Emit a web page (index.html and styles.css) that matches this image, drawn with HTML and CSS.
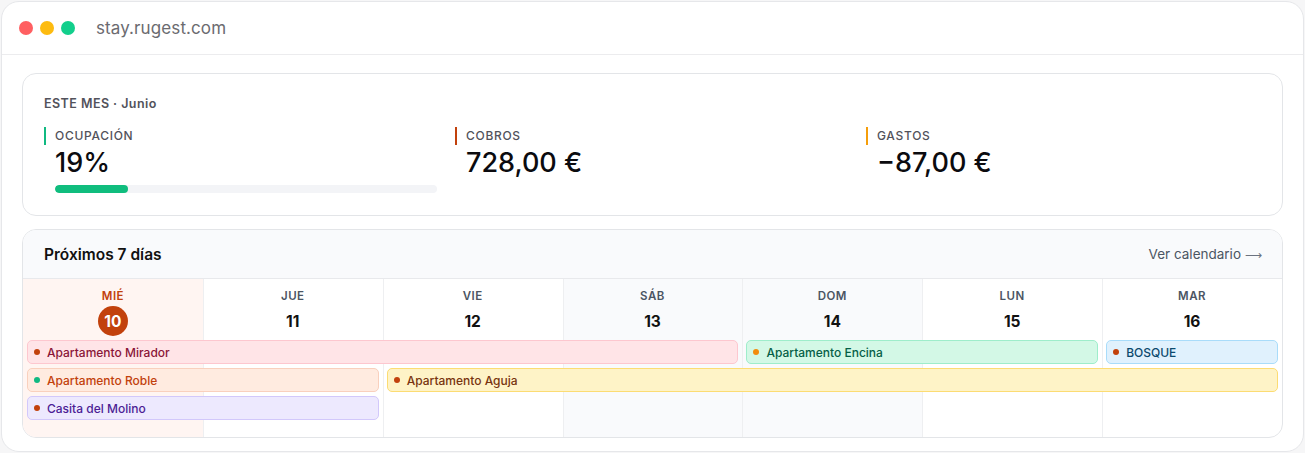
FILE: index.html
```html
<!DOCTYPE html>
<html lang="es">
<head>
    <meta charset="UTF-8">
    <meta name="viewport" content="width=device-width, initial-scale=1.0">
    <title>stay.rugest.com</title>
    <link rel="stylesheet" href="styles.css">
</head>
<body>
    <div class="window">
        <div class="window-bar">
            <span class="dot dot-red"></span>
            <span class="dot dot-yellow"></span>
            <span class="dot dot-green"></span>
            <span class="url">stay.rugest.com</span>
        </div>

        <div class="content">
            <!-- resumen del mes -->
            <div class="card month-card">
                <div class="month-title">ESTE MES · Junio</div>
                <div class="stats">
                    <div class="stat">
                        <div class="stat-label label-green">OCUPACIÓN</div>
                        <div class="stat-value">19%</div>
                        <div class="progress"><div class="progress-fill" style="width: 19%"></div></div>
                    </div>
                    <div class="stat">
                        <div class="stat-label label-red">COBROS</div>
                        <div class="stat-value">728,00 €</div>
                    </div>
                    <div class="stat">
                        <div class="stat-label label-orange">GASTOS</div>
                        <div class="stat-value">−87,00 €</div>
                    </div>
                </div>
            </div>

            <!-- próximos días -->
            <div class="card week-card">
                <div class="week-header">
                    <h3>Próximos 7 días</h3>
                    <a class="week-link" href="#">Ver calendario <span class="arrow">⟶</span></a>
                </div>

                <div class="week-grid">
                    <div class="col col-1 today"></div>
                    <div class="col col-2"></div>
                    <div class="col col-3"></div>
                    <div class="col col-4 weekend"></div>
                    <div class="col col-5 weekend"></div>
                    <div class="col col-6"></div>
                    <div class="col col-7"></div>

                    <div class="day col-1 is-today"><span class="day-name">MIÉ</span><span class="day-num">10</span></div>
                    <div class="day col-2"><span class="day-name">JUE</span><span class="day-num">11</span></div>
                    <div class="day col-3"><span class="day-name">VIE</span><span class="day-num">12</span></div>
                    <div class="day col-4"><span class="day-name">SÁB</span><span class="day-num">13</span></div>
                    <div class="day col-5"><span class="day-name">DOM</span><span class="day-num">14</span></div>
                    <div class="day col-6"><span class="day-name">LUN</span><span class="day-num">15</span></div>
                    <div class="day col-7"><span class="day-name">MAR</span><span class="day-num">16</span></div>

                    <div class="event ev-rose" style="grid-column: 1 / 5; grid-row: 2"><span class="ev-dot dot-rust"></span>Apartamento Mirador</div>
                    <div class="event ev-green" style="grid-column: 5 / 7; grid-row: 2"><span class="ev-dot dot-amber"></span>Apartamento Encina</div>
                    <div class="event ev-sky" style="grid-column: 7 / 8; grid-row: 2"><span class="ev-dot dot-rust"></span>BOSQUE</div>
                    <div class="event ev-peach" style="grid-column: 1 / 3; grid-row: 3"><span class="ev-dot dot-mint"></span>Apartamento Roble</div>
                    <div class="event ev-yellow" style="grid-column: 3 / 8; grid-row: 3"><span class="ev-dot dot-rust"></span>Apartamento Aguja</div>
                    <div class="event ev-violet" style="grid-column: 1 / 3; grid-row: 4"><span class="ev-dot dot-rust"></span>Casita del Molino</div>
                </div>
            </div>
        </div>
    </div>
</body>
</html>
```

FILE: styles.css
```css
* {
    margin: 0;
    padding: 0;
    box-sizing: border-box;
}

body {
    font-family: 'Inter', 'Noto Sans', sans-serif;
    background: #f6f6f7;
    color: #111827;
}

.window {
    width: 1303px;
    height: 451px;
    margin: 1px 0 0 1px;
    background: #fff;
    border: 1px solid #e6e7ea;
    border-radius: 18px;
    overflow: hidden;
}

.window-bar {
    display: flex;
    align-items: center;
    height: 53px;
    padding-left: 17px;
    border-bottom: 1px solid #ececee;
}

.dot {
    width: 14px;
    height: 14px;
    border-radius: 50%;
    margin-right: 7px;
}

.dot-red { background: #ff5f61; }
.dot-yellow { background: #fdbb10; }
.dot-green { background: #12cf8c; }

.url {
    margin-left: 14px;
    font-size: 17px;
    color: #6b6b70;
    letter-spacing: 0.1px;
}

.content {
    padding: 18px 20px 0 20px;
}

.card {
    border: 1px solid #e3e5e8;
    border-radius: 14px;
    background: #fff;
}

/* resumen */
.month-card {
    padding: 22px 21px 22px 21px;
    margin-bottom: 13px;
}

.month-title {
    font-size: 12.5px;
    font-weight: 600;
    color: #52525b;
    line-height: 16px;
    letter-spacing: 0.45px;
    margin-bottom: 15px;
}

.stats {
    display: grid;
    grid-template-columns: repeat(3, 1fr);
    gap: 16px;
}

.stat {
    padding-left: 11px;
    padding-right: 2px;
}

.stat-label {
    margin-left: -11px;
    padding-left: 9px;
    border-left: 2px solid;
    font-size: 12px;
    font-weight: 500;
    line-height: 18px;
    color: #52525b;
    letter-spacing: 0.7px;
}

.label-green { border-color: #10b981; }
.label-red { border-color: #c2410c; }
.label-orange { border-color: #f59e0b; }

.stat-value {
    font-size: 27px;
    font-weight: 500;
    line-height: 32px;
    margin-top: 2px;
    color: #0b0b0f;
}

.progress {
    height: 8px;
    margin-top: 6px;
    background: #f3f4f7;
    border-radius: 4px;
    overflow: hidden;
}

.progress-fill {
    height: 100%;
    background: #10bd7e;
    border-radius: 4px;
}

/* semana */
.week-card {
    overflow: hidden;
}

.week-header {
    display: flex;
    align-items: center;
    justify-content: space-between;
    height: 49px;
    padding: 0 20px 0 21px;
    background: #f9fafc;
    border-bottom: 1px solid #e8e9ec;
}

.week-header h3 {
    font-size: 15.5px;
    font-weight: 600;
    color: #111;
}

.week-link {
    font-size: 13.5px;
    color: #4b5563;
    text-decoration: none;
}

.arrow {
    font-family: 'DejaVu Sans', sans-serif;
    font-size: 12px;
    color: #6b7280;
}

.week-grid {
    display: grid;
    grid-template-columns: repeat(7, 1fr);
    grid-template-rows: auto 24px 24px 24px 13px;
    row-gap: 4px;
}

.col {
    grid-row: 1 / -1;
    border-left: 1px solid #eeeff1;
}

.col.col-1 { border-left: none; }
.col.today { background: #fff5f2; }
.col.weekend { background: #f9fafc; }

.col-1 { grid-column: 1; }
.col-2 { grid-column: 2; }
.col-3 { grid-column: 3; }
.col-4 { grid-column: 4; }
.col-5 { grid-column: 5; }
.col-6 { grid-column: 6; }
.col-7 { grid-column: 7; }

.day {
    grid-row: 1;
    display: flex;
    flex-direction: column;
    align-items: center;
    padding: 9px 0 0;
}

.day-name {
    font-size: 11.5px;
    font-weight: 600;
    line-height: 16px;
    color: #4b5563;
    letter-spacing: 0.5px;
}

.day-num {
    display: flex;
    align-items: center;
    justify-content: center;
    width: 30px;
    height: 30px;
    margin-top: 2px;
    border-radius: 50%;
    font-size: 15.5px;
    font-weight: 700;
    color: #111;
}

.is-today .day-name { color: #c2410c; }

.is-today .day-num {
    background: #c2410c;
    color: #fff;
}

.event {
    display: flex;
    align-items: center;
    margin: 0 4px;
    padding-left: 6px;
    border: 1px solid;
    border-radius: 5px;
    font-size: 12px;
    font-weight: 500;
    white-space: nowrap;
    overflow: hidden;
}

.ev-dot {
    width: 6px;
    height: 6px;
    border-radius: 50%;
    margin-right: 7px;
}

.dot-rust { background: #c2410c; }
.dot-amber { background: #f28c0c; }
.dot-mint { background: #10b981; }

.ev-rose { background: #ffe4e7; border-color: #fdc7cf; color: #8a1538; }
.ev-green { background: #d3f8e6; border-color: #9eedcb; color: #065f46; }
.ev-sky { background: #e0f1fd; border-color: #a9dcfa; color: #0c4a6e; }
.ev-peach { background: #ffebe0; border-color: #f9d0bd; color: #c2410c; }
.ev-yellow { background: #fef3c7; border-color: #fcdc73; color: #78350f; }
.ev-violet { background: #ede9fe; border-color: #d2c8fb; color: #4c1d95; }
```
